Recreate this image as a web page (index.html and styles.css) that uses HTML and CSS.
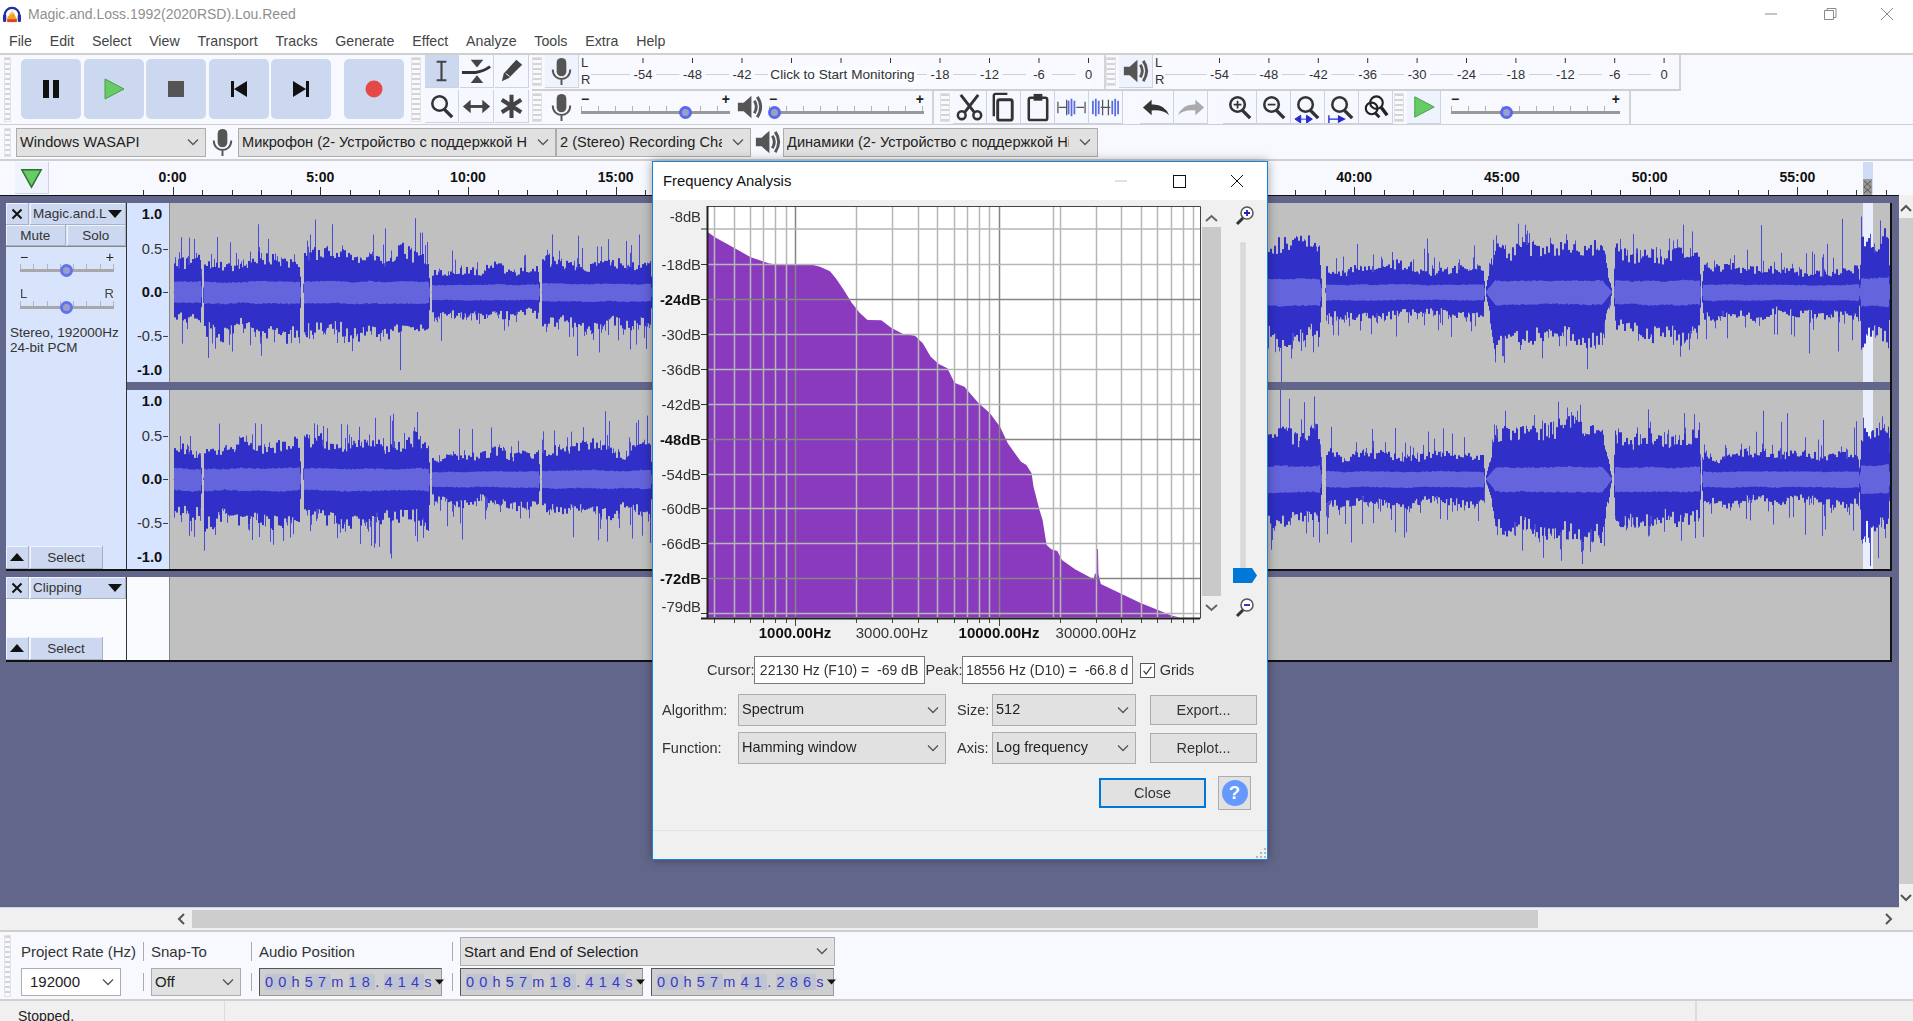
FILE: index.html
```html
<!DOCTYPE html>
<html lang="en">

<head>
    <meta charset="UTF-8">
    <title>Magic.and.Loss.1992(2020RSD).Lou.Reed</title>
    <link rel="stylesheet" href="styles.css">
</head>

<body>
    <svg class="defs" width="0" height="0">
        <symbol id="i-ibeam" viewBox="0 0 34 33"><path d="M12 7h10M17 7v19M12 26h10" fill="none" stroke="#444" stroke-width="2.2"/></symbol>
        <symbol id="i-env" viewBox="0 0 34 33"><path d="M11 5h13l-6.500 8zM11 29h13l-6.500-8z" fill="#444"/><path d="M2 18h14q8-1 15-6" fill="none" stroke="#333" stroke-width="3"/></symbol>
        <symbol id="i-pencil" viewBox="0 0 34 33"><path d="M7 27l2-8L22 5l6 5-14 14z" fill="#444"/><path d="M11 19l4 3" stroke="#fff" stroke-width="1"/></symbol>
        <symbol id="i-zoom" viewBox="0 0 34 33"><circle cx="15" cy="14" r="7.500" fill="none" stroke="#333" stroke-width="2.600"/><path d="M20 20l8 8" stroke="#333" stroke-width="3.500"/></symbol>
        <symbol id="i-shift" viewBox="0 0 34 33"><path d="M8 17h18" stroke="#444" stroke-width="3"/><path d="M3 17l8-7v14zM31 17l-8-7v14z" fill="#444"/></symbol>
        <symbol id="i-multi" viewBox="0 0 34 33"><path d="M17 5v24M7 10l20 13M27 10L7 23" stroke="#444" stroke-width="4.200"/></symbol>
        <symbol id="i-mic" viewBox="0 0 34 33"><rect x="12" y="3" width="10" height="19" rx="5" fill="#555"/><path d="M8 15c0 13 18 13 18 0M17 25v6" fill="none" stroke="#555" stroke-width="2"/></symbol>
        <symbol id="i-speaker" viewBox="0 0 34 33"><path d="M5 12h6l8-7v23l-8-7H5z" fill="#555"/><path d="M22 10q4 6 0 13M25 6q7 10 0 21" fill="none" stroke="#555" stroke-width="3"/></symbol>
        <symbol id="i-cut" viewBox="0 0 34 33"><circle cx="9" cy="25" r="4" fill="none" stroke="#333" stroke-width="2.600"/><circle cx="25" cy="25" r="4" fill="none" stroke="#333" stroke-width="2.600"/><path d="M12 22L26 4M22 22L8 4" stroke="#333" stroke-width="3"/></symbol>
        <symbol id="i-copy" viewBox="0 0 34 33"><rect x="11" y="9" width="15" height="21" rx="2" fill="none" stroke="#333" stroke-width="3"/><path d="M7 26V5q0-2 2-2h12" fill="none" stroke="#333" stroke-width="2.500"/></symbol>
        <symbol id="i-paste" viewBox="0 0 34 33"><rect x="8" y="7" width="19" height="23" rx="2" fill="none" stroke="#333" stroke-width="2.600"/><rect x="13" y="3" width="9" height="7" fill="#333"/></symbol>
        <symbol id="i-trim" viewBox="0 0 34 33"><path d="M4 17h8M22 17h8M12 9v16M31 11v12M3 11v12" stroke="#555" stroke-width="1.300"/><path d="M14 10v14M17 8v18M20 10v14" stroke="#5a6ae0" stroke-width="1.800"/></symbol>
        <symbol id="i-silence" viewBox="0 0 34 33"><path d="M4 10v14M7 8v18M10 10v14M24 10v14M27 8v18M30 10v14" stroke="#5a6ae0" stroke-width="1.800"/><path d="M12 17h10M14 9v16M20 9v16" stroke="#555" stroke-width="1.300"/></symbol>
        <symbol id="i-undo" viewBox="0 0 34 33"><path d="M3 17l9-8v5q13-1 18 11-6-6-18-5v5z" fill="#333"/></symbol>
        <symbol id="i-redo" viewBox="0 0 34 33"><path d="M31 17l-9-8v5Q9 13 4 25q6-6 18-5v5z" fill="#aaa"/></symbol>
        <symbol id="i-zoomin" viewBox="0 0 34 33"><use href="#i-zoom"/><path d="M11 14h8M15 10v8" stroke="#333" stroke-width="1.800"/></symbol>
        <symbol id="i-zoomout" viewBox="0 0 34 33"><use href="#i-zoom"/><path d="M11 14h8" stroke="#333" stroke-width="1.800"/></symbol>
        <symbol id="i-fitsel" viewBox="0 0 34 33"><use href="#i-zoom"/><path d="M4 29l6-4v8zM22 29l-6-4v8zM8 29h10" fill="#2a2acc" stroke="#2a2acc"/></symbol>
        <symbol id="i-fitproj" viewBox="0 0 34 33"><use href="#i-zoom"/><path d="M4 29h16M4 25v8M20 29l-6-3v6z" fill="#2a2acc" stroke="#2a2acc" stroke-width="1.400"/></symbol>
        <symbol id="i-toggle" viewBox="0 0 34 33"><circle cx="13" cy="18" r="6" fill="none" stroke="#222" stroke-width="2.200"/><circle cx="18" cy="12" r="6.500" fill="none" stroke="#222" stroke-width="2.200"/><path d="M23 17l6 8" stroke="#222" stroke-width="3.500"/><path d="M17 23l4 4" stroke="#222" stroke-width="3"/></symbol>
        <symbol id="i-chev" viewBox="0 0 12 8"><path d="M1 1.500l5 5 5-5" fill="none" stroke="#555" stroke-width="1.300"/></symbol>
        <symbol id="i-tri-down" viewBox="0 0 14 8"><path d="M0 0h14l-7 8z" fill="#111"/></symbol>
        <symbol id="i-tri-up" viewBox="0 0 14 8"><path d="M0 8h14L7 0z" fill="#111"/></symbol>
        <symbol id="i-x" viewBox="0 0 12 12"><path d="M1.500 1.500l9 9M10.500 1.500l-9 9" stroke="#111" stroke-width="2"/></symbol>
    </svg>

    <header class="titlebar">
        <svg class="app-icon" viewBox="0 0 20 20">
            <path d="M2 12C2 0 18 0 18 12" fill="none" stroke="#2330a8" stroke-width="2.400"/>
            <rect x="0.500" y="10" width="3.500" height="8" rx="1.500" fill="#2330a8"/>
            <rect x="16" y="10" width="3.500" height="8" rx="1.500" fill="#2330a8"/>
            <path d="M5 14l1-3 1 1 1-5 1 4 1-6 1 5 1-3 1 4 1 2 1 1v4H5z" fill="#f4a020"/>
            <path d="M5 15h10v3H5z" fill="#e0402a"/>
        </svg>
        <span class="title-text">Magic.and.Loss.1992(2020RSD).Lou.Reed</span>
        <div class="win-buttons">
            <svg viewBox="0 0 58 12"><path d="M23 6h12" stroke="#8a8a8a"/></svg>
            <svg viewBox="0 0 58 12"><path d="M24.500 2.500h9v9h-9zM27 2.500V.5h9v9h-2.500" fill="none" stroke="#8a8a8a"/></svg>
            <svg viewBox="0 0 58 12"><path d="M23 0l12 12M35 0L23 12" stroke="#8a8a8a"/></svg>
        </div>
    </header>

    <nav class="menubar">
        <span>File</span><span>Edit</span><span>Select</span><span>View</span><span>Transport</span><span>Tracks</span><span>Generate</span><span>Effect</span><span>Analyze</span><span>Tools</span><span>Extra</span><span>Help</span>
    </nav>

    <section class="toolrow">
        <div class="grip grip-first grip-tall"></div>
        <div class="transport">
            <button class="tbtn"><svg viewBox="0 0 60 60"><path d="M22 21h6v18h-6zM32 21h6v18h-6z" fill="#111"/></svg></button>
            <button class="tbtn"><svg viewBox="0 0 60 60"><path d="M21 20l19 10-19 10z" fill="#66cc66" stroke="#4a9c4a"/></svg></button>
            <button class="tbtn"><svg viewBox="0 0 60 60"><rect x="22" y="22" width="16" height="16" fill="#555"/></svg></button>
            <button class="tbtn"><svg viewBox="0 0 60 60"><path d="M22 22h3v16h-3zM38 22v16l-13-8z" fill="#111"/></svg></button>
            <button class="tbtn"><svg viewBox="0 0 60 60"><path d="M35 22h3v16h-3zM22 22v16l13-8z" fill="#111"/></svg></button>
            <button class="tbtn tbtn-rec"><svg viewBox="0 0 60 60"><circle cx="30" cy="30" r="8.500" fill="#e64848"/></svg></button>
        </div>
        <div class="grip grip-tools grip-tall"></div>
        <div class="tools">
            <button class="ibtn ibtn-on"><svg><use href="#i-ibeam"/></svg></button>
            <button class="ibtn"><svg><use href="#i-env"/></svg></button>
            <button class="ibtn"><svg><use href="#i-pencil"/></svg></button>
            <button class="ibtn"><svg><use href="#i-zoom"/></svg></button>
            <button class="ibtn"><svg><use href="#i-shift"/></svg></button>
            <button class="ibtn"><svg><use href="#i-multi"/></svg></button>
        </div>

        <div class="meter-rows">
            <div class="mrow mrow-top">
                <div class="grip"></div>
                <button class="ibtn ibtn-mid"><svg><use href="#i-mic"/></svg></button>
                <div class="lr"><span>L</span><span>R</span></div>
                <svg class="meter meter-rec" id="meterRec" width="501" height="35"></svg>
                <div class="vline vline-a"></div>
                <div class="grip grip-play"></div>
                <button class="ibtn ibtn-mid ibtn-spk"><svg><use href="#i-speaker"/></svg></button>
                <div class="lr"><span>L</span><span>R</span></div>
                <svg class="meter" id="meterPlay" width="505" height="35"></svg>
                <div class="vline vline-b"></div>
            </div>
            <div class="mrow">
                <div class="grip"></div>
                <div class="plain-icon"><svg><use href="#i-mic"/></svg></div>
                <div class="slider slider-rec"><i>−</i><b>+</b><span class="thumb thumb-rec"></span></div>
                <div class="plain-icon plain-spk"><svg><use href="#i-speaker"/></svg></div>
                <div class="slider slider-vol"><i>−</i><b>+</b><span class="thumb thumb-vol"></span></div>
                <div class="vline vline-c"></div>
                <div class="grip grip-edit"></div>
                <div class="btn-group">
                    <button class="ibtn"><svg><use href="#i-cut"/></svg></button>
                    <button class="ibtn"><svg><use href="#i-copy"/></svg></button>
                    <button class="ibtn"><svg><use href="#i-paste"/></svg></button>
                    <button class="ibtn"><svg><use href="#i-trim"/></svg></button>
                    <button class="ibtn"><svg><use href="#i-silence"/></svg></button>
                </div>
                <div class="btn-group group-undo">
                    <button class="ibtn"><svg><use href="#i-undo"/></svg></button>
                    <button class="ibtn"><svg><use href="#i-redo"/></svg></button>
                </div>
                <div class="btn-group group-zoom">
                    <button class="ibtn"><svg><use href="#i-zoomin"/></svg></button>
                    <button class="ibtn"><svg><use href="#i-zoomout"/></svg></button>
                    <button class="ibtn"><svg><use href="#i-fitsel"/></svg></button>
                    <button class="ibtn"><svg><use href="#i-fitproj"/></svg></button>
                    <button class="ibtn"><svg><use href="#i-toggle"/></svg></button>
                </div>
                <div class="grip grip-speed"></div>
                <button class="ibtn ibtn-mid ibtn-speed"><svg viewBox="0 0 34 33"><path d="M8 6l20 10.500L8 27z" fill="#66cc66" stroke="#4a9c4a"/></svg></button>
                <div class="slider slider-speed"><i>−</i><b>+</b><span class="thumb thumb-speed"></span></div>
                <div class="vline vline-d"></div>
            </div>
        </div>
    </section>

    <section class="devicerow">
        <div class="grip grip-first"></div>
        <div class="combo combo-host"><span>Windows WASAPI</span><svg><use href="#i-chev"/></svg></div>
        <div class="plain-icon dev-icon"><svg><use href="#i-mic"/></svg></div>
        <div class="combo combo-in"><span>Микрофон (2- Устройство с поддержкой High Definition Audio)</span><svg><use href="#i-chev"/></svg></div>
        <div class="combo combo-chan"><span>2 (Stereo) Recording Channels</span><svg><use href="#i-chev"/></svg></div>
        <div class="plain-icon dev-icon"><svg><use href="#i-speaker"/></svg></div>
        <div class="combo combo-out"><span>Динамики (2- Устройство с поддержкой High Definition Audio)</span><svg><use href="#i-chev"/></svg></div>
    </section>

    <section class="rulerrow">
        <button class="pin"><svg viewBox="0 0 34 32"><path d="M7 8h20L17 26z" fill="#66cc66" stroke="#2f6f2f" stroke-width="1.500"/></svg></button>
        <svg class="timeline" id="timeline" width="1863" height="36" viewBox="50 0 1863 36"></svg>
    </section>

    <main class="workspace">
        <div class="tracks">
            <div class="track track-audio">
                <aside class="panel">
                    <div class="panel-head">
                        <button class="pbtn pbtn-x"><svg><use href="#i-x"/></svg></button>
                        <button class="pbtn pbtn-name"><span>Magic.and.L</span><svg><use href="#i-tri-down"/></svg></button>
                    </div>
                    <div class="panel-mute">
                        <button class="pbtn">Mute</button>
                        <button class="pbtn">Solo</button>
                    </div>
                    <div class="slider slider-track"><i>−</i><b>+</b><span class="thumb thumb-mid"></span></div>
                    <div class="slider slider-track"><i class="txt">L</i><b class="txt">R</b><span class="thumb thumb-mid"></span></div>
                    <p class="panel-info">Stereo, 192000Hz<br>24-bit PCM</p>
                    <div class="panel-foot">
                        <button class="pbtn pbtn-x"><svg><use href="#i-tri-up"/></svg></button>
                        <button class="pbtn pbtn-sel">Select</button>
                    </div>
                </aside>
                <div class="channels">
                    <div class="channel">
                        <svg class="vruler" width="43" height="179" viewBox="0 0 43 179"></svg>
                        <canvas class="wave" width="1720" height="179" data-seed="11"></canvas>
                    </div>
                    <div class="channel">
                        <svg class="vruler" width="43" height="179" viewBox="0 0 43 179"></svg>
                        <canvas class="wave" width="1720" height="179" data-seed="29"></canvas>
                    </div>
                </div>
            </div>

            <div class="track track-label">
                <aside class="panel panel-white">
                    <div class="panel-head">
                        <button class="pbtn pbtn-x"><svg><use href="#i-x"/></svg></button>
                        <button class="pbtn pbtn-name"><span>Clipping</span><svg><use href="#i-tri-down"/></svg></button>
                    </div>
                    <div class="panel-foot">
                        <button class="pbtn pbtn-x"><svg><use href="#i-tri-up"/></svg></button>
                        <button class="pbtn pbtn-sel">Select</button>
                    </div>
                </aside>
                <div class="label-ruler"></div>
                <div class="label-body"></div>
            </div>
        </div>
        <div class="vscroll">
            <svg viewBox="0 0 14 10"><path d="M2 8l5-5 5 5" fill="none" stroke="#555" stroke-width="2"/></svg>
            <div class="vthumb"></div>
            <svg viewBox="0 0 14 10"><path d="M2 2l5 5 5-5" fill="none" stroke="#555" stroke-width="2"/></svg>
        </div>
    </main>

    <div class="hscroll">
        <svg viewBox="0 0 10 14"><path d="M8 2L3 7l5 5" fill="none" stroke="#555" stroke-width="2"/></svg>
        <div class="hthumb"></div>
        <svg viewBox="0 0 10 14"><path d="M2 2l5 5-5 5" fill="none" stroke="#555" stroke-width="2"/></svg>
    </div>

    <section class="selbar">
        <div class="grip grip-sel"></div>
        <div class="selgrid">
            <div class="cell">Project Rate (Hz)</div>
            <div class="cell cell-sep">Snap-To</div>
            <div class="cell cell-sep">Audio Position</div>
            <div class="cell cell-sep">
                <div class="combo combo-range"><span>Start and End of Selection</span><svg><use href="#i-chev"/></svg></div>
            </div>
            <div class="cell">
                <div class="combo combo-rate"><span>192000</span><svg><use href="#i-chev"/></svg></div>
            </div>
            <div class="cell cell-sep">
                <div class="combo combo-snap"><span>Off</span><svg><use href="#i-chev"/></svg></div>
            </div>
            <div class="cell cell-sep">
                <div class="timecode"><span>00</span>h<span>57</span>m<span>18</span>.<span>414</span>s<svg><use href="#i-tri-down"/></svg></div>
            </div>
            <div class="cell cell-sep cell-times">
                <div class="timecode"><span>00</span>h<span>57</span>m<span>18</span>.<span>414</span>s<svg><use href="#i-tri-down"/></svg></div>
                <div class="timecode"><span>00</span>h<span>57</span>m<span>41</span>.<span>286</span>s<svg><use href="#i-tri-down"/></svg></div>
            </div>
        </div>
    </section>

    <footer class="statusbar">
        <div class="status-main">Stopped.</div>
        <div class="status-mid"></div>
    </footer>

    <!-- Frequency Analysis window sits over the tracks -->
    <div class="dialog">
        <div class="dlg-title">
            <span>Frequency Analysis</span>
            <div class="dlg-win">
                <svg viewBox="0 0 58 14"><path d="M23 7h12" stroke="#c4c4c4"/></svg>
                <svg viewBox="0 0 58 14"><rect x="23.500" y="1.500" width="12" height="12" fill="none" stroke="#111"/></svg>
                <svg viewBox="0 0 58 14"><path d="M23 1l12 12M35 1L23 13" stroke="#111"/></svg>
            </div>
        </div>
        <div class="dlg-body">
            <svg class="plot" id="plot" width="613" height="447" viewBox="653 200 613 447">
                <rect x="707" y="207" width="493" height="411" fill="#fff"/>
                <polygon fill="#8a3bbd" points="707.300,231.700 715,237.300 733,247.300 750.800,257.300 768.600,263.300 776.500,264.700 812,264.700 820,266.700 830,271.300 835.800,278.300 843.800,290 851.700,302.700 859.600,312.700 867.500,320 881.300,320.300 891.200,327.700 903,334 915,335.700 922.800,343.300 930.700,356.700 938.700,364 947.400,368.300 954.500,382.700 964.400,386.700 978.200,402.700 990,413.300 1000,426.700 1007.800,443.300 1013.800,451.700 1021,461.700 1026.400,465 1031.600,473.300 1033.500,486.700 1039.500,510 1042.600,520 1046.600,545 1051.300,549.300 1057.300,551 1062,560 1075,569.300 1089,576.700 1093.700,579.300 1094.800,574 1096.400,573.300 1096.800,549 1098,549 1098.400,574 1100.800,584 1140,602.700 1158,610 1172,615.700 1180,617.600 707.300,617.600"/>
                <g id="plotGrid"></g>
                <path d="M707.500 206.500h493M707.500 206.500v412M1200.500 206.500v412" fill="none" stroke="#444" stroke-width="1"/>
                <path d="M701 618.500h499" stroke="#222" stroke-width="2"/>
                <path d="M707.500 206v413" stroke="#222" stroke-width="2"/>
                <path d="M1206 221l5.500-5 5.500 5" fill="none" stroke="#666" stroke-width="2"/>
                <rect x="1202" y="227" width="19" height="369" fill="#c9c9c9"/>
                <path d="M1206 605l5.500 5 5.500-5" fill="none" stroke="#666" stroke-width="2"/>
                <g>
                    <circle cx="1247" cy="213" r="6" fill="#fff" stroke="#555" stroke-width="1.500"/>
                    <path d="M1244 213h6M1247 210v6" stroke="#2020c0" stroke-width="1.800"/>
                    <path d="M1243 218l-6 6" stroke="#333" stroke-width="3"/>
                </g>
                <rect x="1241" y="243" width="4" height="325" fill="#dcdcdc" stroke="#cfcfcf"/>
                <path d="M1233 568h19l5 7.500-5 7.500h-19z" fill="#0078d7"/>
                <g>
                    <circle cx="1247" cy="605" r="6" fill="#fff" stroke="#555" stroke-width="1.500"/>
                    <path d="M1244 605h6" stroke="#2020c0" stroke-width="1.800"/>
                    <path d="M1243 610l-6 6" stroke="#333" stroke-width="3"/>
                </g>
            </svg>

            <div class="dlg-readout">
                <label>Cursor:</label>
                <div class="readout readout-a">22130 Hz (F10) =&nbsp; -69 dB</div>
                <label>Peak:</label>
                <div class="readout readout-b">18556 Hz (D10) =&nbsp; -66.8 d</div>
                <span class="check"><svg viewBox="0 0 15 15"><path d="M3 8l3 3.500L12 3" fill="none" stroke="#333" stroke-width="1.300"/></svg></span>
                <label>Grids</label>
            </div>

            <div class="dlg-grid">
                <label>Algorithm:</label>
                <div class="combo dcombo"><span>Spectrum</span><svg><use href="#i-chev"/></svg></div>
                <label>Size:</label>
                <div class="combo dcombo"><span>512</span><svg><use href="#i-chev"/></svg></div>
                <button class="dbtn">Export...</button>
                <label>Function:</label>
                <div class="combo dcombo"><span>Hamming window</span><svg><use href="#i-chev"/></svg></div>
                <label>Axis:</label>
                <div class="combo dcombo"><span>Log frequency</span><svg><use href="#i-chev"/></svg></div>
                <button class="dbtn">Replot...</button>
            </div>

            <div class="dlg-actions">
                <button class="dbtn dbtn-close">Close</button>
                <button class="helpbtn"><span>?</span></button>
            </div>

            <div class="dlg-foot">
                <svg viewBox="0 0 11 11" width="11" height="11"><path d="M9 1h2v2H9zM5 5h2v2H5zM9 5h2v2H9zM1 9h2v2H1zM5 9h2v2H5zM9 9h2v2H9z" fill="#b5b5b5"/></svg>
            </div>
        </div>
    </div>

    <script src="script.js"></script>
</body>

</html>
```

FILE: styles.css
```css
* {
    box-sizing: border-box;
}

html,
body {
    margin: 0;
    height: 100%;
}

body {
    position: relative;
    width: 1913px;
    height: 1021px;
    overflow: hidden;
    font-family: "Liberation Sans", Arial, sans-serif;
    font-size: 14px;
    color: #222;
    background: #fff;
}

button {
    font: inherit;
    color: inherit;
    padding: 0;
    margin: 0;
}

.defs {
    position: absolute;
}

/* title and menu */
.titlebar {
    display: flex;
    align-items: center;
    height: 28px;
    padding-left: 2px;
    margin-bottom: 2px;
    background: #fff;
}

.app-icon {
    width: 20px;
    height: 19px;
    margin-right: 6px;
}

.title-text {
    font-size: 14px;
    color: #8f8f8f;
}

.win-buttons {
    margin-left: auto;
    display: flex;
    width: 174px;
    margin-right: -3px;
}

.win-buttons svg {
    width: 58px;
    height: 12px;
}

.menubar {
    display: flex;
    gap: 17.800px;
    height: 23px;
    padding: 3px 0 0 9px;
    font-size: 14.200px;
    color: #444;
    background: #fff;
}

/* toolbars */
.toolrow {
    display: flex;
    height: 71px;
    background: #f7f9fe;
    border-top: 2px solid #cfcfcf;
}

.grip {
    flex: none;
    width: 10px;
    height: 29px;
    margin-top: 2px;
    background: repeating-linear-gradient(#d4d4d4 0 2px, #f7f9fe 2px 5px);
    border: 1px solid #e3e3e3;
}

.grip-tall {
    height: 65px;
}

.grip-first {
    width: 7px;
    margin-left: 4px;
}

.transport {
    display: flex;
    gap: 2.500px;
    margin: 4px 0 0 10px;
}

.tbtn {
    width: 60px;
    height: 60px;
    border: none;
    border-radius: 5px;
    background: #ccd8f0;
}

.tbtn svg {
    display: block;
    width: 60px;
    height: 60px;
}

.tbtn-rec {
    margin-left: 10.500px;
}

.grip-tools {
    margin-left: 7px;
}

.tools {
    display: grid;
    grid-template-columns: repeat(3, 34px);
    grid-auto-rows: 33px;
    gap: 2px 1px;
    margin: 0 0 0 4px;
    width: 104px;
}

.ibtn {
    display: block;
    width: 34px;
    height: 33px;
    border: none;
    border-right: 1px solid #cdd3e2;
    border-bottom: 1px solid #cdd3e2;
    background: #f5f8ff;
}

.ibtn svg {
    display: block;
    width: 33px;
    height: 32px;
}

.ibtn-on {
    background: #ccd8f0;
}

.ibtn-mid {
    background: #eef3fd;
    margin-left: 3px;
}

.meter-rows {
    margin-left: 3px;
    display: flex;
    flex-direction: column;
}

.mrow {
    display: flex;
    height: 33px;
}

.mrow-top {
    height: 36px;
    border-bottom: 2px solid #cfcfcf;
}

.lr {
    width: 10px;
    margin-left: 2px;
    display: flex;
    flex-direction: column;
    gap: 2px;
    font-size: 13px;
    line-height: 15px;
    color: #333;
}

.meter {
    flex: none;
}

.meter-rec {
    margin-right: 0;
}

.meter text {
    font-size: 13px;
    fill: #333;
    text-anchor: middle;
}

.vline {
    flex: none;
    width: 2px;
    background: #d4d4d4;
}

.vline-a {
    margin-left: 12px;
}

.grip-play {
    margin-left: 0;
}

.ibtn-spk {
    margin-left: 3px;
}

.vline-b {
    margin-left: 9px;
}

.plain-icon {
    flex: none;
    width: 34px;
    height: 33px;
    margin-left: 3px;
}

.plain-icon svg {
    display: block;
    width: 33px;
    height: 32px;
}

.plain-spk {
    width: 30px;
    margin-left: 3px;
}

.slider {
    position: relative;
    flex: none;
    height: 33px;
    background:
        linear-gradient(#999, #999) 0 20px / 100% 3px no-repeat,
        repeating-linear-gradient(90deg, #b5b5b5 0 1px, transparent 1px 17px) 0 15px / 100% 5px no-repeat;
}

.slider i,
.slider b {
    position: absolute;
    top: 0;
    font-style: normal;
    font-weight: bold;
    font-size: 14px;
    line-height: 16px;
    color: #222;
}

.slider i {
    left: 0;
}

.slider b {
    right: 0;
}

.thumb {
    position: absolute;
    top: 15px;
    width: 13px;
    height: 13px;
    margin-left: -6.500px;
    border-radius: 50%;
    border: 3.500px solid #5a68ea;
    background: #9a9fc8;
}

.slider-rec {
    width: 149px;
    margin-left: 2px;
}

.thumb-rec {
    left: 70%;
}

.slider-vol {
    width: 155px;
    margin-left: 6px;
}

.thumb-vol {
    left: 3.500%;
}

.vline-c {
    margin-left: 8px;
}

.grip-edit {
    margin-left: 6px;
}

.btn-group {
    display: flex;
    flex: none;
    margin-left: 3px;
}

.group-undo {
    margin-left: 17px;
}

.group-zoom {
    margin-left: 15px;
}

.grip-speed {
    margin-left: 1px;
}

.ibtn-speed {
    margin-left: 3px;
}

.slider-speed {
    width: 169px;
    margin-left: 10px;
}

.thumb-speed {
    left: 33%;
}

.vline-d {
    margin-left: 9px;
}

/* device row */
.devicerow {
    display: flex;
    align-items: center;
    height: 35px;
    background: #f7f9fe;
    border-top: 1px solid #cfcfcf;
}

.devicerow .grip-first {
    margin-top: 0;
}

.combo {
    display: flex;
    align-items: center;
    flex: none;
    height: 29px;
    padding: 0 6px 0 3px;
    border: 1px solid #adadad;
    background: #e1e1e1;
    font-size: 14.600px;
    color: #222;
}

.combo span {
    flex: 1;
    overflow: hidden;
    white-space: nowrap;
}

.combo svg {
    flex: none;
    width: 12px;
    height: 8px;
    margin-left: 10px;
}

.combo-host {
    width: 190px;
    margin-left: 5px;
}

.dev-icon {
    width: 31px;
    margin-left: 0;
}

.combo-in {
    width: 318px;
    margin-left: 1px;
}

.combo-chan {
    width: 195px;
}

.devicerow .combo-out {
    width: 315px;
    margin-left: 1px;
}

/* timeline */
.rulerrow {
    display: flex;
    height: 36px;
    background: #f7f9fe;
    border-top: 2px solid #cfcfcf;
}

.pin {
    flex: none;
    width: 34px;
    height: 32px;
    margin: 1px 1px 0 15px;
    border: none;
    border-right: 1px solid #cdd3e2;
    border-bottom: 1px solid #cdd3e2;
    background: #eef3fd;
}

.pin svg {
    display: block;
    width: 33px;
    height: 31px;
}

.timeline {
    flex: none;
    margin-top: -2px;
}

.timeline text {
    font-size: 14px;
    font-weight: bold;
    fill: #111;
    text-anchor: middle;
}

/* tracks */
.workspace {
    display: flex;
    height: 713px;
}

.tracks {
    width: 1899px;
    padding: 7px 7px 0 6px;
    background: #62668a;
    border-top: 1px solid #111;
    border-bottom: 1px solid #cfd2de;
}

.track {
    display: flex;
    border-bottom: 2px solid #111;
    border-right: 2px solid #111;
}

.track-audio {
    height: 368px;
}

.track-label {
    height: 85px;
    margin-top: 6px;
}

.panel {
    flex: none;
    display: flex;
    flex-direction: column;
    width: 121px;
    border-right: 1px solid #333;
    background: #d8e4fb;
}

.panel-white {
    background: #fafbff;
}

.panel-head {
    display: flex;
    gap: 1px;
    height: 22px;
}

.pbtn {
    border: none;
    border-right: 1px solid #a9b2c4;
    border-bottom: 1px solid #a9b2c4;
    box-shadow: inset 1px 1px 0 #eef3ff;
    background: #ccd8f0;
    font-size: 13.500px;
    color: #333;
}

.pbtn-x {
    flex: none;
    display: flex;
    align-items: center;
    justify-content: center;
    width: 23px;
}

.pbtn-x svg {
    width: 14px;
    height: 10px;
}

.panel-head .pbtn-x svg {
    width: 12px;
    height: 12px;
}

.pbtn-name {
    flex: 1;
    display: flex;
    align-items: center;
    justify-content: space-between;
    padding: 0 3px 0 3px;
}

.pbtn-name svg {
    width: 14px;
    height: 8px;
}

.panel-mute {
    display: flex;
    gap: 1px;
    height: 22px;
    border-bottom: 1px solid #888;
}

.panel-mute .pbtn {
    flex: 1;
}

.slider-track {
    width: 94px;
    height: 27px;
    margin: 6px 0 0 14px;
    background:
        linear-gradient(#a8a8a8, #a8a8a8) 0 16px / 100% 3px no-repeat,
        repeating-linear-gradient(90deg, #b5b5b5 0 1px, transparent 1px 13.300px) 0 11px / 100% 5px no-repeat;
}

.slider-track + .slider-track {
    margin-top: 10px;
}

.slider-track i,
.slider-track b {
    top: -4px;
    font-weight: normal;
}

.slider-track .txt {
    font-size: 13px;
    color: #444;
}

.slider-track .thumb {
    top: 11px;
    border-color: #6272ee;
}

.thumb-mid {
    left: 49%;
}

.panel-info {
    margin: 8px 0 0 4px;
    font-size: 13.500px;
    line-height: 15px;
    color: #333;
}

.panel-foot {
    display: flex;
    gap: 1px;
    height: 23px;
    margin-top: auto;
}

.pbtn-sel {
    width: 73px;
}

.channels {
    flex: 1;
    display: flex;
    flex-direction: column;
    gap: 8px;
}

.channel {
    display: flex;
    height: 179px;
}

.vruler {
    flex: none;
    background: #d6e4ff;
    border-right: 1px solid #888;
}

.vruler text {
    font-size: 15px;
    fill: #333;
    text-anchor: end;
}

.vruler .major {
    font-weight: bold;
    fill: #111;
}

.wave {
    display: block;
    background: #c0c0c0;
}

.label-ruler {
    flex: none;
    width: 43px;
    background: #fafbff;
    border-right: 1px solid #888;
}

.label-body {
    flex: 1;
    background: #c0c0c0;
}

.vscroll {
    display: flex;
    flex-direction: column;
    align-items: center;
    width: 14px;
    background: #f0f0f0;
}

.vscroll svg {
    flex: none;
    width: 14px;
    height: 10px;
    margin: 8px 0 5px;
}

.vthumb {
    flex: 1;
    width: 14px;
    background: #cdcdcd;
}

.vscroll svg:last-child {
    margin: 9px 0 5px;
}

.hscroll {
    display: flex;
    align-items: center;
    height: 22px;
    padding-left: 176px;
    background: #f0f0f0;
}

.hscroll svg {
    flex: none;
    width: 10px;
    height: 14px;
}

.hthumb {
    width: 1346px;
    height: 18px;
    margin: 0 346px 0 6px;
    background: #cdcdcd;
}

/* selection toolbar */
.selbar {
    display: flex;
    height: 71px;
    background: #f7f9fe;
    border-top: 2px solid #cfcfcf;
    border-bottom: 2px solid #cfcfcf;
}

.grip-sel {
    width: 7px;
    height: 62px;
    margin: 3px 10px 0 4px;
}

.selgrid {
    display: grid;
    grid-template-columns: 122px 108px 201px 384px;
    grid-template-rows: 30px 29px;
    row-gap: 1px;
    margin-top: 4px;
    font-size: 15px;
    color: #333;
}

.cell {
    position: relative;
    display: flex;
    align-items: center;
    gap: 7px;
}

.cell-sep {
    padding-left: 8px;
}

.cell-sep::before {
    content: "";
    position: absolute;
    left: 0;
    top: 6px;
    bottom: 5px;
    width: 1px;
    background: #aaa;
}

.selgrid .combo {
    font-size: 15px;
}

.combo-range {
    width: 375px;
    height: 29px;
}

.combo-rate {
    width: 100px;
    height: 28px;
    background: #fff;
    padding-left: 8px;
}

.combo-snap {
    width: 90px;
    height: 28px;
}

.timecode {
    flex: none;
    display: flex;
    align-items: center;
    width: 183px;
    height: 28px;
    padding-left: 5px;
    border: 1px solid #999;
    border-top-color: #555;
    border-left-color: #555;
    background: #cfcfcf;
    font-size: 14.500px;
    letter-spacing: 5.200px;
    color: #3a3ac0;
}

.timecode span {
    background: #bfc4d2;
}

.timecode svg {
    flex: none;
    width: 9px;
    height: 6px;
    margin-left: -2px;
}

.cell-times {
    gap: 8px;
}

.statusbar {
    display: flex;
    height: 20px;
    background: #f0f0f0;
    overflow: hidden;
    font-size: 14px;
    color: #222;
}

.status-main {
    width: 225px;
    padding: 7px 0 0 18px;
    border-right: 1px solid #dcdcdc;
}

.status-mid {
    width: 1472px;
    border-right: 2px solid #dcdcdc;
}

/* dialog */
.dialog {
    position: absolute;
    left: 652px;
    top: 161px;
    width: 616px;
    height: 699px;
    display: flex;
    flex-direction: column;
    border: 1px solid #1a80d8;
    background: #f0f0f0;
    box-shadow: 0 0 10px rgba(0, 0, 0, 0.35);
}

.dlg-title {
    flex: none;
    display: flex;
    align-items: center;
    height: 38px;
    padding-left: 10px;
    background: #fff;
    font-size: 14.800px;
    color: #111;
}

.dlg-win {
    display: flex;
    margin-left: auto;
    width: 174px;
    margin-right: 1px;
}

.dlg-win svg {
    width: 58px;
    height: 14px;
}

.dlg-body {
    flex: 1;
    display: flex;
    flex-direction: column;
}

.plot {
    flex: none;
    display: block;
}

.plot text {
    font-size: 14.800px;
    fill: #333;
}

.plot .ylabel {
    text-anchor: end;
}

.plot .xlabel {
    text-anchor: middle;
    font-size: 15px;
}

.plot .major {
    font-weight: bold;
    fill: #111;
}

.dlg-readout {
    display: flex;
    align-items: center;
    height: 28px;
    margin-top: 9px;
    padding-left: 54px;
    font-size: 14.500px;
    color: #333;
}

.readout {
    flex: none;
    height: 28px;
    margin: 0 1px;
    line-height: 26px;
    border: 1px solid #7a7a7a;
    background: #fff;
    font-size: 14px;
    white-space: nowrap;
    overflow: hidden;
    text-align: center;
}

.readout-a {
    width: 171px;
    margin-left: -1px;
}

.readout-b {
    width: 171px;
    margin-left: -1px;
}

.check {
    flex: none;
    width: 15px;
    height: 15px;
    margin: 0 5px 0 6px;
    border: 1px solid #555;
    background: #fff;
}

.check svg {
    display: block;
    width: 13px;
    height: 13px;
}

.dlg-grid {
    display: grid;
    grid-template-columns: 76px 208px 46px 144px 121px;
    grid-template-rows: 32px 32px;
    row-gap: 6px;
    align-items: center;
    margin-top: 10px;
    padding-left: 9px;
    font-size: 14.500px;
    color: #333;
}

.dlg-grid label:nth-child(3),
.dlg-grid label:nth-child(8) {
    padding-left: 11px;
}

.dcombo {
    height: 32px;
    font-size: 14.500px;
    padding-bottom: 3px;
}

.dcombo svg {
    margin-top: 3px;
}

.dbtn {
    height: 30px;
    border: 1px solid #adadad;
    background: #e1e1e1;
    font-size: 14.500px;
    color: #333;
}

.dlg-grid .dbtn {
    margin-left: 14px;
    width: 107px;
}

.dlg-actions {
    display: flex;
    justify-content: flex-end;
    align-items: center;
    gap: 12px;
    margin-top: 12px;
    padding-right: 16px;
}

.dbtn-close {
    width: 107px;
    border: 2px solid #0078d7;
}

.helpbtn {
    display: flex;
    align-items: center;
    justify-content: center;
    width: 33px;
    height: 34px;
    border: 1px solid #adadad;
    background: #e1e1e1;
}

.helpbtn span {
    display: block;
    width: 26px;
    height: 26px;
    border-radius: 50%;
    background: #6699ff;
    color: #fff;
    font-size: 19px;
    font-weight: bold;
    line-height: 26px;
    text-align: center;
}

.dlg-foot {
    display: flex;
    justify-content: flex-end;
    align-items: flex-end;
    flex: 1;
    margin-top: 20px;
    padding: 0 1px 1px 0;
    border-top: 1px solid #e2e2e2;
}
```

FILE: script.js
```js
// repeated marks and the waveforms are easier to draw than to write out
const NS = "http://www.w3.org/2000/svg";

function add(parent, name, attrs, text) {
    let el = document.createElementNS(NS, name);
    for (let key in attrs) {
        el.setAttribute(key, attrs[key]);
    }
    if (text) {
        el.textContent = text;
    }
    parent.appendChild(el);
    return el;
}

// level meters
function drawMeter(svg, first, step, labels, hideFrom, hideTo) {
    add(svg, "rect", { x: 0, y: 2, width: svg.getAttribute("width"), height: 30, fill: "#f9faff" });
    add(svg, "line", { x1: 0, x2: svg.getAttribute("width"), y1: 19.5, y2: 19.5, stroke: "#d0d0d0" });
    for (let i = 0; i < labels.length; i++) {
        let x = first + step * i;
        add(svg, "line", { x1: x, x2: x, y1: 3, y2: 8, stroke: "#333" });
        if (x > hideFrom && x < hideTo) {
            continue;
        }
        add(svg, "rect", { x: x - 13, y: 12, width: 26, height: 15, fill: "#f9faff" });
        add(svg, "text", { x: x, y: 24 }, labels[i]);
    }
    if (hideTo > 0) {
        add(svg, "rect", { x: hideFrom, y: 11, width: hideTo - hideFrom, height: 18, fill: "#fbfcff" });
        add(svg, "text", { x: (hideFrom + hideTo) / 2, y: 24 }, "Click to Start Monitoring").setAttribute("style", "font-size:13.6px");
    }
}

let dbs = ["-54", "-48", "-42", "-36", "-30", "-24", "-18", "-12", "-6", "0"];
drawMeter(document.getElementById("meterRec"), 52, 49.5, dbs, 177, 326);
drawMeter(document.getElementById("meterPlay"), 54.5, 49.4, dbs, 0, 0);

// timeline
let timeline = document.getElementById("timeline");
let times = ["0:00", "5:00", "10:00", "15:00", "20:00", "25:00", "30:00", "35:00", "40:00", "45:00", "50:00", "55:00"];
for (let i = -1; i < 60; i++) {
    let x = Math.round(172.6 + 29.54 * i) + 0.5;
    let major = i >= 0 && i % 5 === 0;
    add(timeline, "line", { x1: x, x2: x, y1: major ? 28 : 31, y2: 36, stroke: "#333" });
}
times.forEach((t, i) => {
    add(timeline, "text", { x: 172.6 + 147.7 * i, y: 23 }, t);
});
add(timeline, "rect", { x: 1863, y: 3, width: 10, height: 33, fill: "#cfdcf8" });
add(timeline, "rect", { x: 1863, y: 20, width: 9, height: 16, fill: "#9a9a9a" });
add(timeline, "path", { d: "M1864 22l7 6-7 6M1871 22l-7 6 7 6", fill: "none", stroke: "#555" });

// dB rulers beside the channels
for (let svg of document.querySelectorAll(".vruler")) {
    let rows = [["1.0", 14, true], ["0.5", 50, false], ["0.0", 94, true], ["-0.5", 139, false], ["-1.0", 174, true]];
    for (let row of rows) {
        add(svg, "text", { x: 36, y: row[1], class: row[2] ? "major" : "" }, row[0]);
    }
    add(svg, "path", { d: "M37 45.500h5M37 89.500h5M37 134.500h5", stroke: "#333" });
}

// waveform sections: from, to, top, bottom, spike, rms, fade
const SECTIONS = [
    [173, 202, 36, 38, 20, 10, 2],
    [203, 301, 38, 48, 30, 10, 2],
    [303, 430, 44, 46, 34, 10, 2],
    [431, 540, 28, 29, 26, 7, 2],
    [541, 652, 36, 36, 28, 8, 2],
    [1250, 1322, 52, 50, 28, 12, 3],
    [1325, 1485, 28, 29, 26, 7, 2],
    [1486, 1612, 56, 56, 26, 11, 10],
    [1614, 1701, 48, 46, 22, 11, 2],
    [1702, 1860, 28, 27, 36, 7, 2],
    [1860, 1890, 58, 58, 34, 13, 2]
];

function drawWave(canvas) {
    let ctx = canvas.getContext("2d");
    let seed = parseInt(canvas.dataset.seed);
    let rand = () => {
        seed = (seed * 16807) % 2147483647;
        return seed / 2147483647;
    };
    let mid = 89;
    ctx.fillStyle = "#e9efff";
    ctx.fillRect(1863 - 170, 0, 10, canvas.height);
    for (let sec of SECTIONS) {
        let fromA = rand();
        let toA = rand();
        let fromB = rand();
        let toB = rand();
        let up = 0;
        let down = 0;
        let rmsUp = 0;
        let rmsDown = 0;
        for (let x = sec[0]; x < sec[1]; x++) {
            let k = x % 16;
            if (k === 0) {
                fromA = toA;
                toA = rand();
                fromB = toB;
                toB = rand();
            }
            let slowA = fromA + (toA - fromA) * k / 16;
            let slowB = fromB + (toB - fromB) * k / 16;
            let edge = Math.min(1, (x - sec[0] + 1) / sec[6], (sec[1] - x) / sec[6]);
            // the body only changes every other pixel, which gives the ragged top
            if (x % 2 === 0) {
                up = sec[2] * (0.72 + 0.4 * slowA) * (0.72 + 0.36 * rand());
                down = sec[3] * (0.72 + 0.4 * slowB) * (0.72 + 0.36 * rand());
                rmsUp = sec[5] * (0.9 + 0.2 * slowA + 0.1 * rand());
                rmsDown = sec[5] * (0.9 + 0.2 * slowB + 0.1 * rand());
            }
            if (rand() < 0.2) {
                ctx.fillStyle = "#4a4ad2";
                let tall = rand() * rand() * sec[4] * 1.4;
                ctx.fillRect(x - 170, mid - (up + tall) * edge, 1, tall * edge + 1);
            }
            if (rand() < 0.2) {
                ctx.fillStyle = "#4a4ad2";
                let tall = rand() * rand() * sec[4] * 1.4;
                ctx.fillRect(x - 170, mid + down * edge, 1, tall * edge + 1);
            }
            ctx.fillStyle = "#3030c8";
            ctx.fillRect(x - 170, mid - up * edge, 1, (up + down) * edge);
            ctx.fillStyle = "#6464dc";
            ctx.fillRect(x - 170, mid - rmsUp * edge, 1, (rmsUp + rmsDown + 1) * edge);
        }
    }
}

for (let canvas of document.querySelectorAll(".wave")) {
    drawWave(canvas);
}

// spectrum plot grid, labels and ticks
let grid = document.getElementById("plotGrid");
let plot = document.getElementById("plot");
let freqs = [400, 500, 600, 700, 800, 900, 1000, 2000, 3000, 4000, 5000, 6000, 7000, 8000, 9000, 10000, 20000, 30000, 40000, 50000, 60000, 70000, 80000, 90000];
for (let f of freqs) {
    let x = Math.round(795 + 203.8 * Math.log10(f / 1000)) + 0.5;
    let dark = f === 1000 || f === 10000;
    add(grid, "line", { x1: x, x2: x, y1: 207, y2: 618, stroke: dark ? "#858585" : "#b6b6b6", "stroke-width": 1.5 });
    add(grid, "line", { x1: x, x2: x, y1: 618, y2: dark ? 626 : 623, stroke: "#444" });
}
add(grid, "line", { x1: 1053.5, x2: 1053.5, y1: 207, y2: 618, stroke: "#b6b6b6", "stroke-width": 1.5 });

let rowsDb = [[229, 0], [264.5, 0], [299.5, 1], [334.5, 0], [369.5, 0], [404.5, 0], [439.5, 1], [474.5, 0], [508.5, 0], [543.5, 0], [578.5, 1], [613.5, 0]];
for (let row of rowsDb) {
    add(grid, "line", { x1: 707, x2: 1200, y1: row[0], y2: row[0], stroke: row[1] ? "#858585" : "#b6b6b6", "stroke-width": 1.5 });
    add(grid, "line", { x1: 701, x2: 707, y1: row[0], y2: row[0], stroke: "#333" });
}

let labelsDb = [["-8dB", 222, 0], ["-18dB", 270, 0], ["-24dB", 305, 1], ["-30dB", 340, 0], ["-36dB", 375, 0], ["-42dB", 410, 0], ["-48dB", 445, 1], ["-54dB", 480, 0], ["-60dB", 514, 0], ["-66dB", 549, 0], ["-72dB", 584, 1], ["-79dB", 612, 0]];
for (let l of labelsDb) {
    add(plot, "text", { x: 701, y: l[1], class: l[2] ? "ylabel major" : "ylabel" }, l[0]);
}
let labelsHz = [["1000.00Hz", 795, 1], ["3000.00Hz", 892, 0], ["10000.00Hz", 999, 1], ["30000.00Hz", 1096, 0]];
for (let l of labelsHz) {
    add(plot, "text", { x: l[1], y: 638, class: l[2] ? "xlabel major" : "xlabel" }, l[0]);
}
```
